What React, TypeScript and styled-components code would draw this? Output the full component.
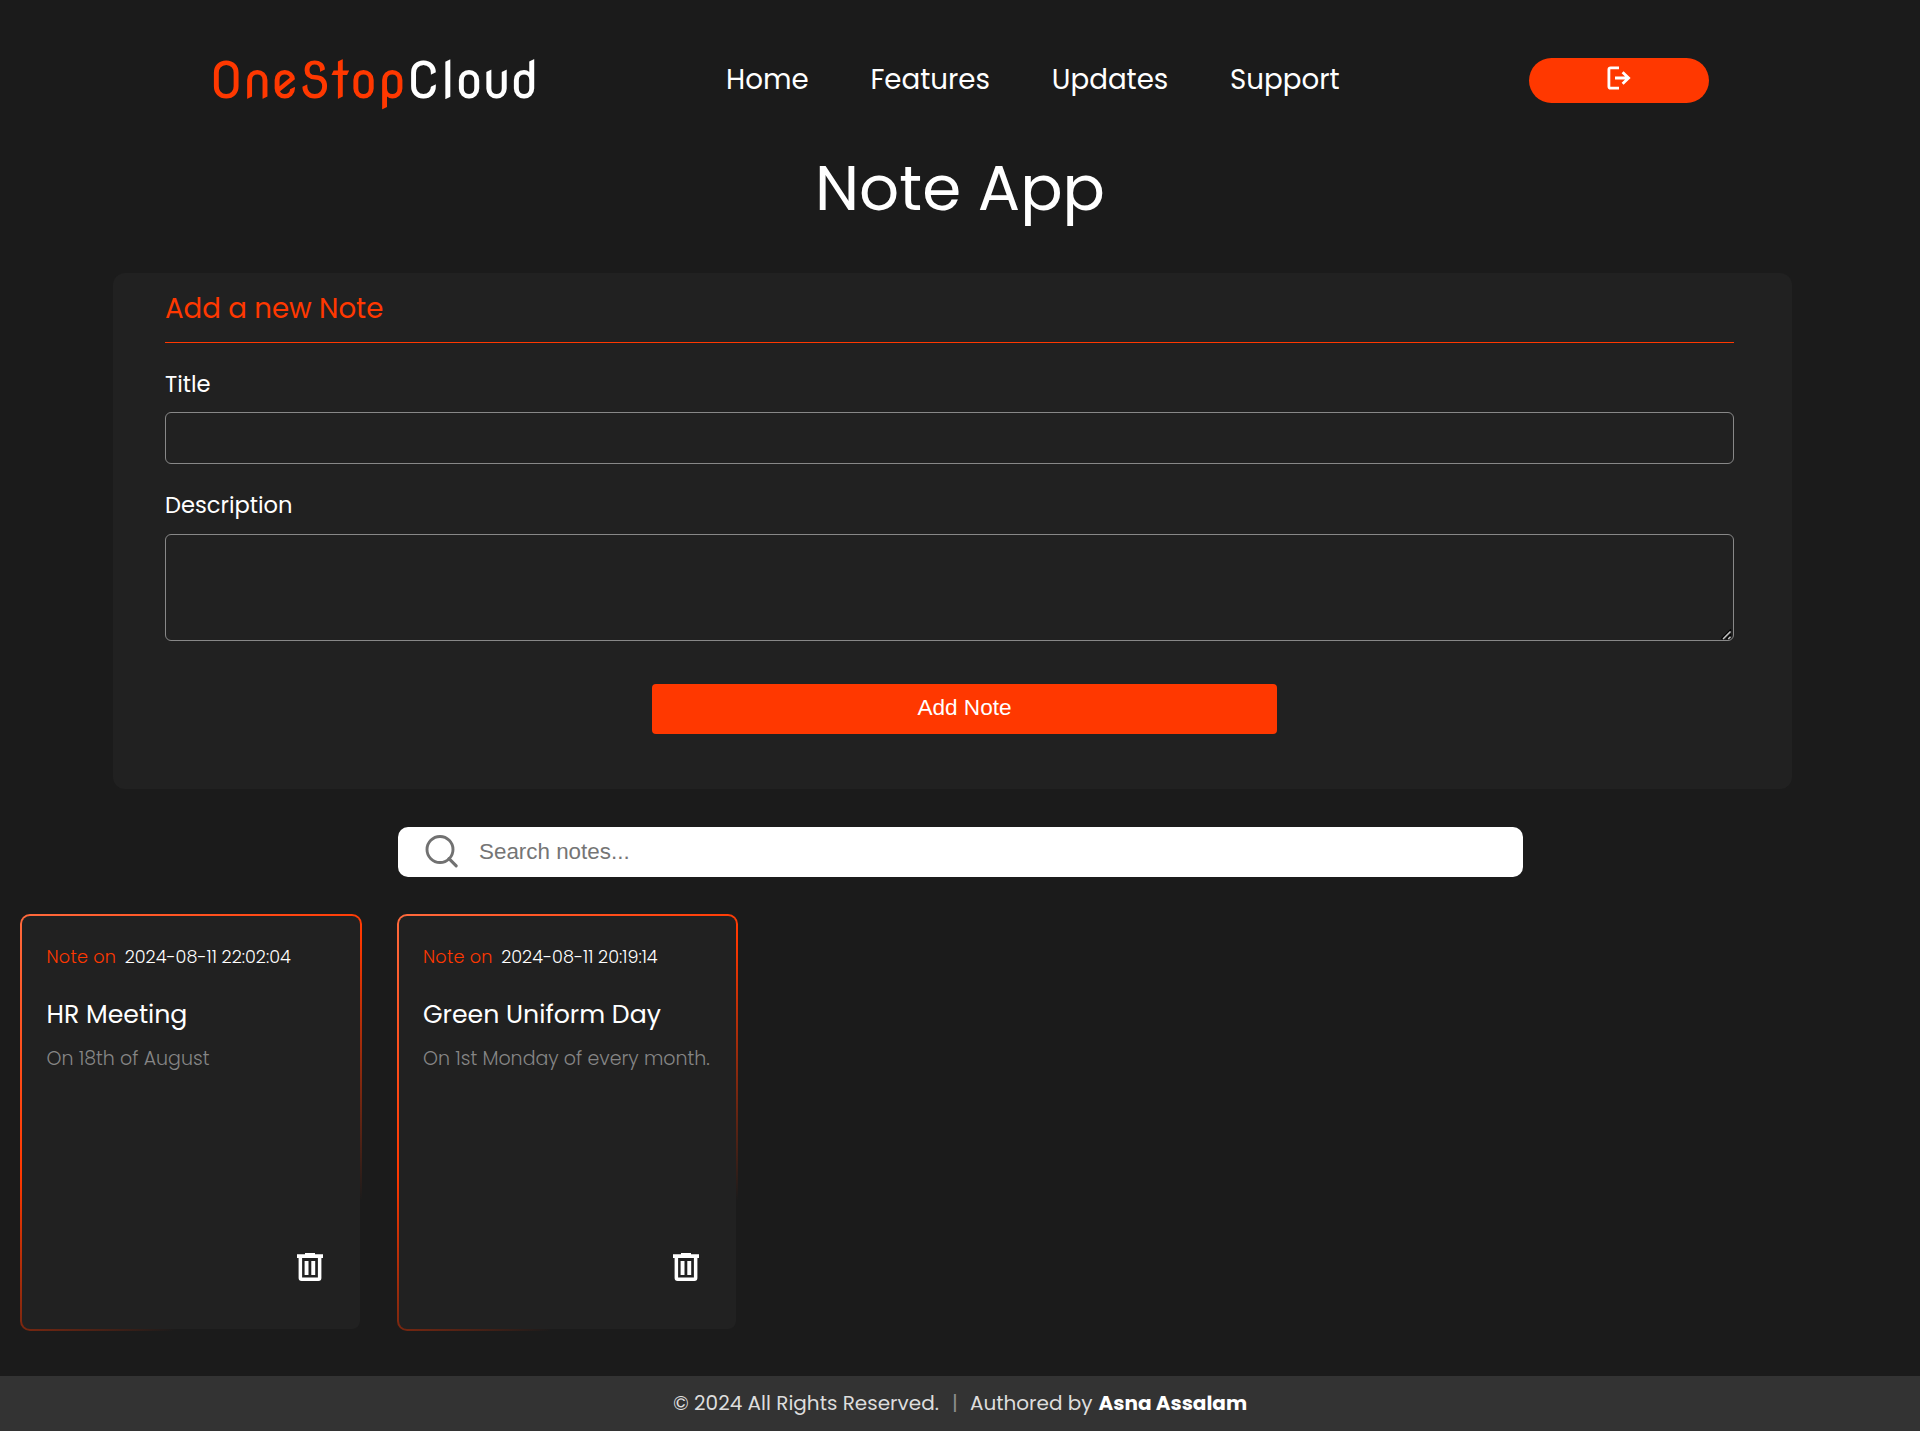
import React from "react";
import styled, { createGlobalStyle } from "styled-components";

const accent = "#ff3800";

const GlobalStyle = createGlobalStyle`
  *, *::before, *::after { box-sizing: border-box; }
  body {
    margin: 0;
    background: #1b1b1b;
    color: #fff;
    font-family: Poppins, Inter, "Open Sans", sans-serif;
  }
  h1, h2, h3, p { margin: 0; font-weight: 400; }
`;

const Page = styled.div`
  display: flex;
  flex-direction: column;
  min-height: 1431px;
`;

const Header = styled.header`
  display: flex;
  align-items: center;
  height: 156px;
  padding: 5px 211px 0 209px;
`;

const Logo = styled.div`
  width: 517px;
  padding-bottom: 1px;
  font: 400 50px/64px "Nova Round", Roboto, sans-serif;
  white-space: nowrap;
`;

const LogoAccent = styled.span`
  color: ${accent};
`;

const Nav = styled.nav`
  display: flex;
  flex: 1;
  gap: 61.8px;
  padding-bottom: 2px;
`;

const NavLink = styled.a`
  font-size: 27.7px;
  line-height: 41px;
  color: #fff;
`;

const LogoutButton = styled.button`
  display: flex;
  align-items: center;
  justify-content: center;
  width: 180px;
  height: 45px;
  padding: 0 0 5px;
  border: 0;
  border-radius: 23px;
  background: ${accent};
`;

const PageTitle = styled.h1`
  font-size: 62.8px;
  line-height: 64px;
  text-align: center;
`;

const Panel = styled.section`
  display: flex;
  flex-direction: column;
  width: 1679px;
  margin: 53px 0 0 113px;
  padding: 16px 58px 55px 52px;
  border-radius: 12px;
  background: #212121;
`;

const PanelTitle = styled.h2`
  padding-bottom: 14px;
  border-bottom: 1px solid ${accent};
  color: ${accent};
  font-size: 27.6px;
  line-height: 39px;
`;

const Label = styled.label`
  margin: 25px 0 12px;
  font-size: 22.6px;
  line-height: 32px;
`;

const TextInput = styled.input`
  height: 52px;
  border: 1px solid #888;
  border-radius: 6px;
  background: transparent;
  color: #fff;
`;

const TextAreaBox = styled.div`
  position: relative;
  display: flex;
  height: 107px;
  margin-top: 1px;
`;

const TextArea = styled.textarea`
  flex: 1;
  border: 1px solid #888;
  border-radius: 6px;
  background: transparent;
  color: #fff;
  resize: none;
`;

const Grip = styled.svg`
  position: absolute;
  right: 2px;
  bottom: 1px;
`;

const AddButton = styled.button`
  width: 625px;
  height: 50px;
  margin: 43px 0 0 487px;
  padding: 0 0 2px;
  border: 0;
  border-radius: 4px;
  background: ${accent};
  color: #fff;
  font: 22.6px "Liberation Sans", Arial, sans-serif;
`;

const SearchBar = styled.div`
  display: flex;
  align-items: center;
  gap: 20px;
  width: 1125px;
  height: 50px;
  margin: 38px 0 0 398px;
  padding: 0 20px 0 27px;
  border-radius: 10px;
  background: #fff;
`;

const SearchInput = styled.input`
  flex: 1;
  padding: 0 0 1px;
  border: 0;
  outline: 0;
  background: transparent;
  font: 22.4px "Liberation Sans", Arial, sans-serif;
  &::placeholder { color: #757575; }
`;

const Cards = styled.main`
  display: grid;
  grid-template-columns: repeat(5, 341.5px);
  gap: 35px;
  margin: 37px 0 45px 20px;
`;

const CardFrame = styled.article`
  display: flex;
  min-width: 0;
  height: 417px;
  padding: 2px;
  border-radius: 10px;
  background: linear-gradient(145deg, #ff6a3d 0%, ${accent} 40%, #1b1b1b 80%);
`;

const CardBody = styled.div`
  display: flex;
  flex: 1;
  flex-direction: column;
  min-width: 0;
  padding: 29px 20px 48px 24.5px;
  border-radius: 8px;
  background: #212121;
`;

const Stamp = styled.p`
  display: flex;
  gap: 8.4px;
  font-size: 17.6px;
  font-weight: 300;
  line-height: 24px;
  white-space: nowrap;
`;

const StampLabel = styled.span`
  color: ${accent};
  letter-spacing: 0.28px;
`;

const NoteTitle = styled.h3`
  margin-top: 28px;
  font-size: 25.2px;
  line-height: 35px;
`;

const NoteText = styled.p`
  margin-top: 13px;
  color: #868686;
  font-size: 19px;
  font-weight: 300;
  line-height: 27px;
  white-space: nowrap;
`;

const DeleteButton = styled.button`
  display: flex;
  margin: auto 17px 0 auto;
  padding: 0;
  border: 0;
  background: none;
`;

const Footer = styled.footer`
  display: flex;
  align-items: center;
  justify-content: center;
  height: 55px;
  padding-bottom: 1px;
  background: #333;
  color: #ddd;
  font-size: 20px;
  line-height: 28px;
`;

const Divider = styled.span`
  display: flex;
  justify-content: center;
  width: 2px;
  margin: 0 14px 0 15px;
  color: #8c8c8c;
`;

const Author = styled.strong`
  margin-left: 6px;
  color: #fff;
  font-weight: 700;
`;

const LogoutIcon = () => (
  <svg width="24" height="24" viewBox="0 0 24 24" fill="none" stroke="#fff" strokeWidth="2.8">
    <path d="M12 1.8H3.6Q1.9 1.8 1.9 3.5V20.5Q1.9 22.2 3.6 22.2H12" />
    <path d="M8 12H22M15.6 6.2L21.6 12L15.6 17.8" />
  </svg>
);

const SearchIcon = () => (
  <svg width="34" height="34" viewBox="0 0 34 34" fill="none" stroke="#717171" strokeWidth="2.9">
    <circle cx="15" cy="14.5" r="13" />
    <path d="M24 23.6L31.2 30.9" strokeWidth="3.1" strokeLinecap="round" />
  </svg>
);

const TrashIcon = () => (
  <svg width="26" height="28" viewBox="0 0 26 28" fill="#fff">
    <path d="M8 0H18V1.3H26V5H0V1.3H8Z" />
    <path
      fillRule="evenodd"
      d="M1.6 4H24.4V25Q24.4 28 21.4 28H4.6Q1.6 28 1.6 25ZM5.1 5V24.6H20.9V5Z"
    />
    <path d="M7.6 8H11.5V22H7.6ZM14.3 8H18.2V22H14.3Z" />
  </svg>
);

const links = ["Home", "Features", "Updates", "Support"];

const notes = [
  { time: "2024-08-11 22:02:04", title: "HR Meeting", text: "On 18th of August" },
  { time: "2024-08-11 20:19:14", title: "Green Uniform Day", text: "On 1st Monday of every month." },
];

export default function App() {
  return (
    <Page>
      <GlobalStyle />
      <Header>
        <Logo><LogoAccent>OneStop</LogoAccent>Cloud</Logo>
        <Nav>
          {links.map((label) => (
            <NavLink key={label}>{label}</NavLink>
          ))}
        </Nav>
        <LogoutButton aria-label="Log out"><LogoutIcon /></LogoutButton>
      </Header>
      <PageTitle>Note App</PageTitle>
      <Panel>
        <PanelTitle>Add a new Note</PanelTitle>
        <Label>Title</Label>
        <TextInput />
        <Label>Description</Label>
        <TextAreaBox>
          <TextArea />
          <Grip width="11" height="11" viewBox="0 0 11 11" fill="none">
            <path d="M0.5 10L10 0.5M5.5 10L10 5.5" stroke="#000" strokeWidth="1.6" />
            <path d="M2 10L9.5 2.5M7.2 10L9.5 7.7" stroke="#c4c4c4" strokeWidth="1.5" />
          </Grip>
        </TextAreaBox>
        <AddButton>Add Note</AddButton>
      </Panel>
      <SearchBar>
        <SearchIcon />
        <SearchInput placeholder="Search notes..." />
      </SearchBar>
      <Cards>
        {notes.map((n) => (
          <CardFrame key={n.time}>
            <CardBody>
              <Stamp>
                <StampLabel>Note on</StampLabel>
                <span>{n.time}</span>
              </Stamp>
              <NoteTitle>{n.title}</NoteTitle>
              <NoteText>{n.text}</NoteText>
              <DeleteButton aria-label="Delete note"><TrashIcon /></DeleteButton>
            </CardBody>
          </CardFrame>
        ))}
      </Cards>
      <Footer>
        <span>© 2024 All Rights Reserved.</span>
        <Divider>|</Divider>
        <span>Authored by</span>
        <Author>Asna Assalam</Author>
      </Footer>
    </Page>
  );
}
